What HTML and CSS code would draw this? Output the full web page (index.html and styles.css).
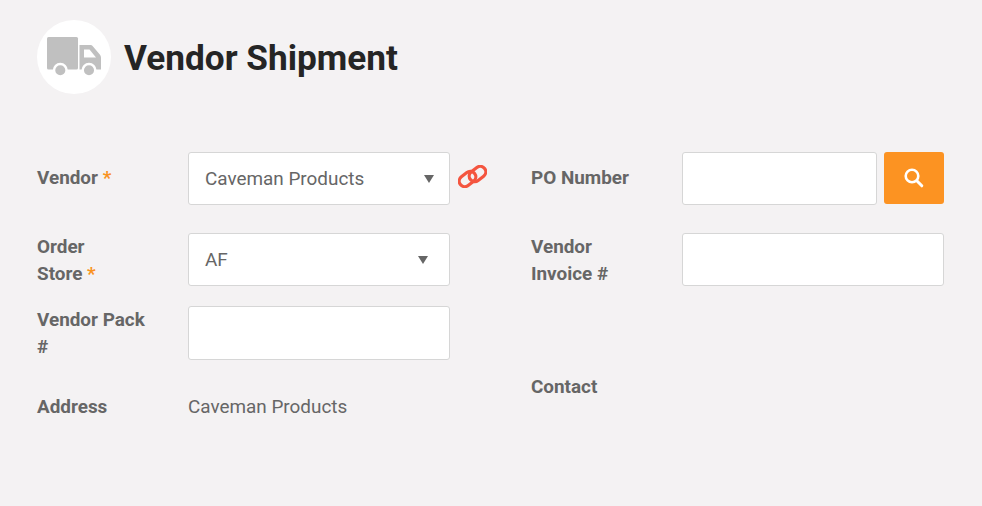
FILE: index.html
```html
<!DOCTYPE html>
<html lang="en">
<head>
<meta charset="utf-8">
<title>Vendor Shipment</title>
<link rel="stylesheet" href="styles.css">
</head>
<body>
<header class="page-head">
  <div class="head-icon">
    <svg width="54" height="40" viewBox="0 0 54 40">
      <rect fill="#c0c0c0" x="0" y="0" width="31" height="32.500" rx="1.500"/>
      <path fill="#c0c0c0" fill-rule="evenodd" d="M32.500 8H43c1.200 0 2.200.5 3 1.400l6.800 8.100c.8.900 1.200 2 1.200 3.200V32.500H32.500zM37 12.500v8h12l-6.500-8z"/>
      <circle fill="#c0c0c0" stroke="#fff" stroke-width="2.500" cx="13.300" cy="33.300" r="6.300"/>
      <circle fill="#c0c0c0" stroke="#fff" stroke-width="2.500" cx="42" cy="33.300" r="6.300"/>
    </svg>
  </div>
  <h1>Vendor Shipment</h1>
</header>

<main class="form">
  <section class="col col-left">
    <div class="row row-first">
      <label class="lbl">Vendor <span class="req">*</span></label>
      <div class="select select-wide">Caveman Products<span class="caret"></span></div>
      <svg class="link-icon" width="29" height="23" viewBox="0 0 29 23" fill="none" stroke="#f4553f" stroke-width="3.200">
        <rect x="0.500" y="8.500" width="18" height="11" rx="5.500" transform="rotate(-38 9.500 14)"/>
        <rect x="10.500" y="3.500" width="18" height="11" rx="5.500" transform="rotate(-38 19.500 9)"/>
      </svg>
    </div>
    <div class="row row-second">
      <label class="lbl">Order<br>Store <span class="req">*</span></label>
      <div class="select">AF<span class="caret"></span></div>
    </div>
    <div class="row row-third">
      <label class="lbl">Vendor Pack<br>#</label>
      <input class="field" type="text">
    </div>
    <div class="row row-address">
      <label class="lbl">Address</label>
      <span class="value">Caveman Products</span>
    </div>
  </section>

  <section class="col col-right">
    <div class="row row-first">
      <label class="lbl">PO Number</label>
      <input class="field field-short" type="text">
      <button class="search-btn" type="button">
        <svg width="20" height="20" viewBox="0 0 20 20" fill="none" stroke="#fff">
          <circle cx="8" cy="8" r="6.300" stroke-width="2.600"/>
          <path d="M12.800 12.800l5 5" stroke-width="3" stroke-linecap="round"/>
        </svg>
      </button>
    </div>
    <div class="row row-second">
      <label class="lbl">Vendor<br>Invoice #</label>
      <input class="field" type="text">
    </div>
    <div class="row row-contact">
      <label class="lbl">Contact</label>
    </div>
  </section>
</main>
</body>
</html>
```

FILE: styles.css
```css
body {
  margin: 0;
  height: 506px;
  overflow: hidden;
  background-color: #f4f2f3;
  font-family: Roboto, "Liberation Sans", sans-serif;
  font-size: 18.900px;
  color: #666666;
}

.page-head {
  display: flex;
  align-items: center;
  gap: 13px;
  padding: 20px 0 0 37px;
}
.head-icon {
  width: 74px;
  height: 74px;
  border-radius: 50%;
  background-color: #ffffff;
  display: flex;
  align-items: center;
  justify-content: center;
}
h1 {
  margin: 1px 0 0;
  font-size: 35.200px;
  font-weight: 700;
  color: #252525;
}

.form {
  display: flex;
  padding: 58px 0 0 37px;
}
.col-left { width: 494px; }

.row {
  display: flex;
  align-items: flex-start;
}
.row-second { margin-top: 28px; }
.row-third { margin-top: 19px; }
.row-address { margin-top: 33px; }
.row-contact { margin-top: 86px; }

.lbl {
  width: 151px;
  flex: none;
  font-weight: 700;
  line-height: 27px;
}
.row-first .lbl { padding-top: 12px; }
.req { color: #f9931f; }

.select, .field {
  box-sizing: border-box;
  width: 262px;
  height: 53px;
  border: 1px solid #d6d6d6;
  border-radius: 3px;
  background-color: #ffffff;
  font-family: inherit;
  font-size: 18.900px;
  margin: 0;
}
.select {
  display: flex;
  align-items: center;
  justify-content: space-between;
  padding: 0 21px 0 16px;
}
.select-wide { padding-right: 15px; }
.caret {
  width: 0;
  height: 0;
  border-left: 5.500px solid transparent;
  border-right: 5.500px solid transparent;
  border-top: 8px solid #666666;
}
.row-third .field { height: 54px; }
.field-short { width: 195px; }

.link-icon { margin: 13px 0 0 8px; }

.search-btn {
  width: 60px;
  height: 52px;
  margin-left: 7px;
  border: none;
  border-radius: 3px;
  background-color: #fc9322;
  padding: 0;
  display: flex;
  align-items: center;
  justify-content: center;
}
.value { line-height: 27px; }
```
